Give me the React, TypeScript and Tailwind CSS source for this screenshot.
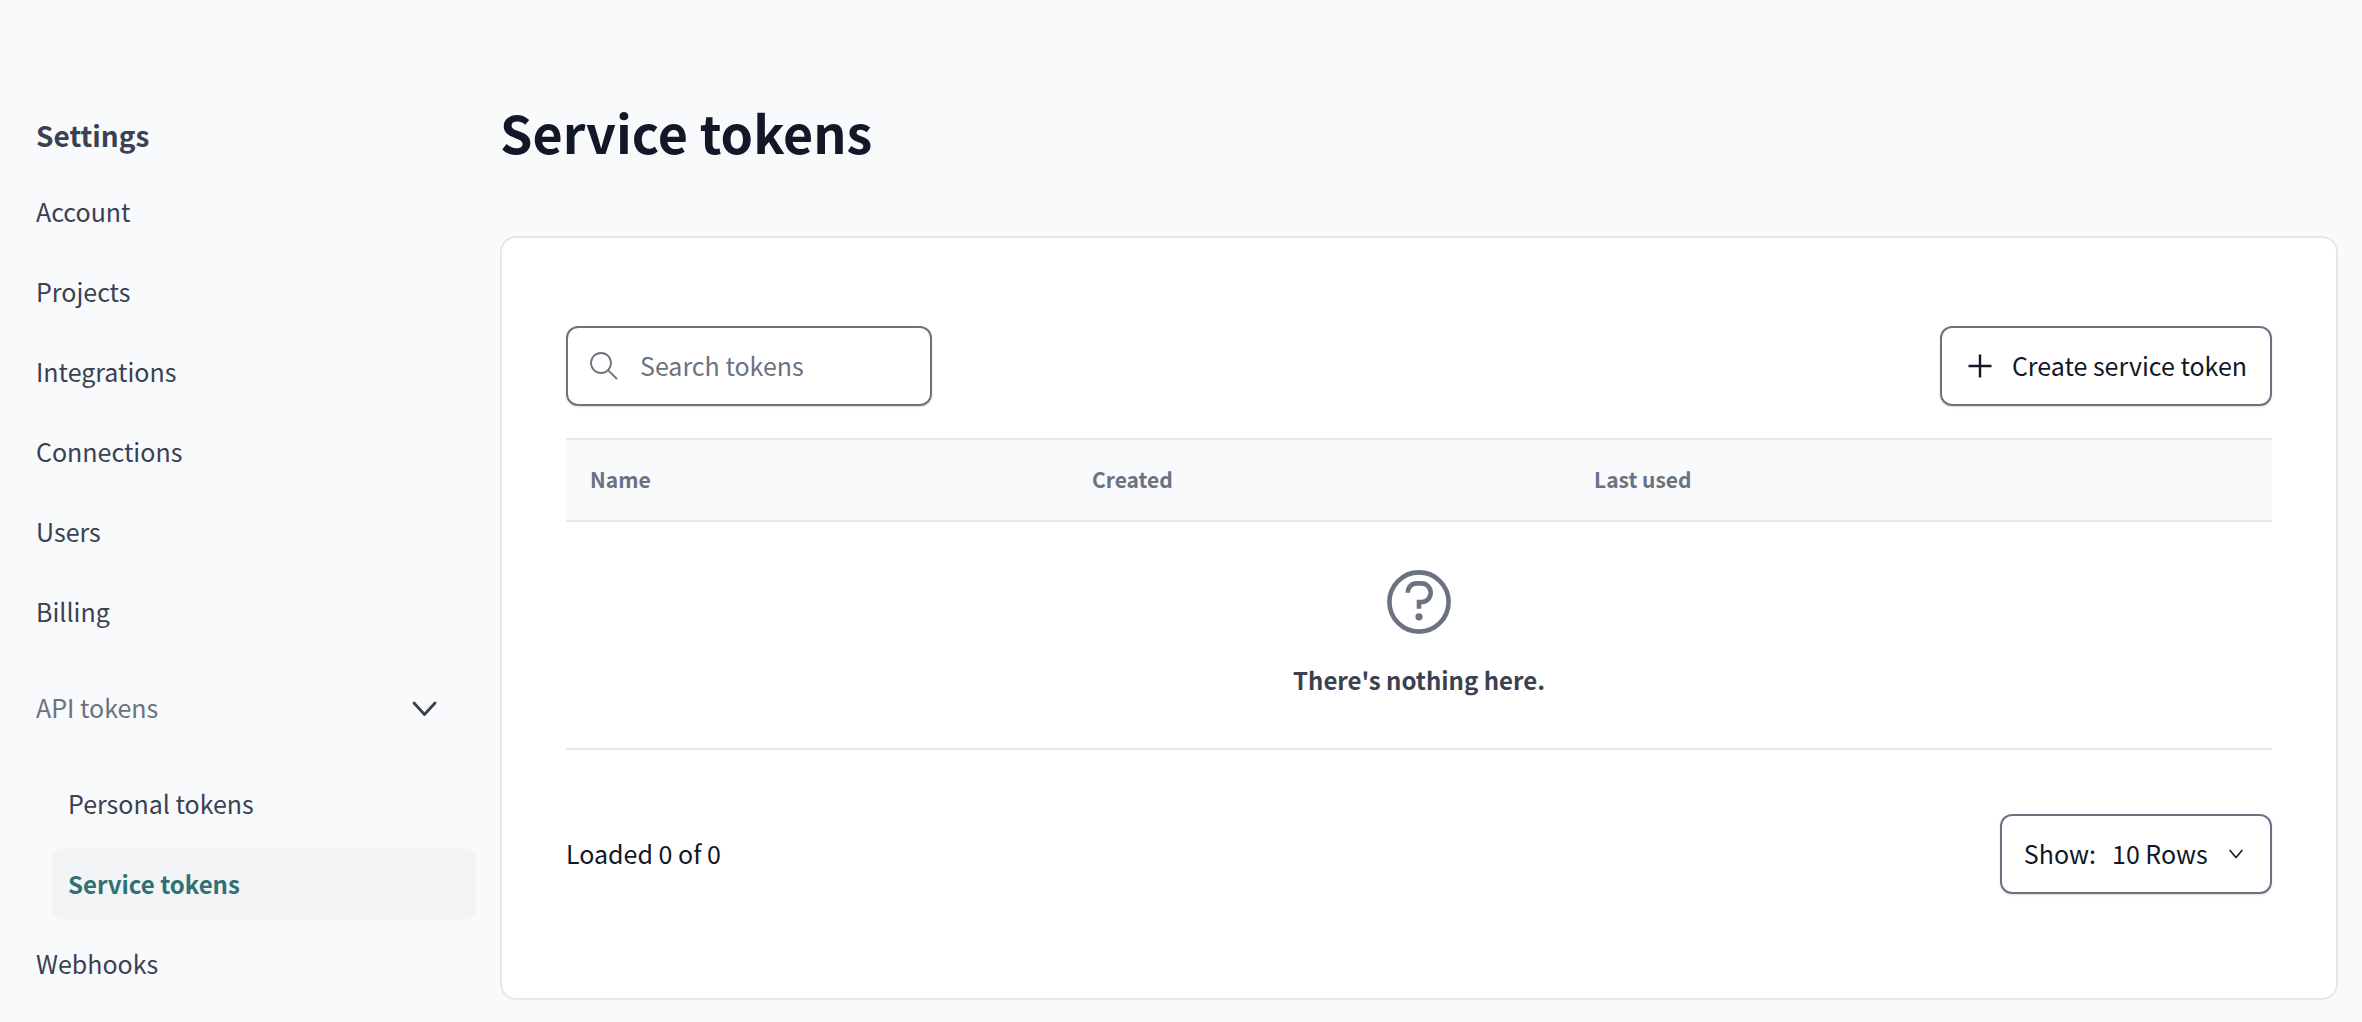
import { useState } from "react";

const topLinks = ["Account", "Projects", "Integrations", "Connections", "Users", "Billing"];
const tokenLinks = ["Personal tokens", "Service tokens"];
const columns = ["Name", "Created", "Last used"];

function NavLink({ label, active = false }: { label: string; active?: boolean }) {
  return (
    <a
      href="#"
      aria-current={active ? "page" : undefined}
      className={
        active
          ? "flex h-18 items-center rounded-xl bg-[#f3f4f6] px-4 text-[24px] font-bold text-[#2f7175]"
          : "flex h-18 items-center rounded-xl px-4 pb-0.5"
      }
    >
      {label}
    </a>
  );
}

function ChevronIcon() {
  return (
    <svg viewBox="0 0 32 32" className="size-8" fill="none" stroke="currentColor" strokeWidth="2.8" strokeLinecap="round" strokeLinejoin="round" aria-hidden="true">
      <path d="M6 12 16.500 23.500 27 12" />
    </svg>
  );
}

function SmallChevronIcon() {
  return (
    <svg viewBox="0 0 20 20" className="size-5" fill="none" stroke="currentColor" strokeWidth="1.6" strokeLinecap="round" strokeLinejoin="round" aria-hidden="true">
      <path d="M4 6.500 10 13.500l6-7" />
    </svg>
  );
}

function SearchIcon() {
  return (
    <svg viewBox="0 0 28 28" className="size-7 shrink-0" fill="none" stroke="currentColor" strokeWidth="1.8" strokeLinecap="round" aria-hidden="true">
      <circle cx="11" cy="11" r="10" />
      <path d="m18.300 18.300 8.200 8.200" />
    </svg>
  );
}

function PlusIcon() {
  return (
    <svg viewBox="0 0 24 24" className="size-6" fill="none" stroke="currentColor" strokeWidth="2.400" aria-hidden="true">
      <path d="M12 0.500v23M0.500 12h23" />
    </svg>
  );
}

function QuestionIcon() {
  return (
    <svg viewBox="0 0 64 64" className="size-16" fill="none" stroke="currentColor" strokeWidth="4.600" aria-hidden="true">
      <circle cx="32" cy="32" r="29.600" />
      <path d="M20.800 22.800C20.800 17 24.800 13.400 29.500 13.400h4.900c5.300 0 9.300 4.100 9.300 9.300S39.700 32 34.400 32H32v6.800" />
      <circle cx="32" cy="46.800" r="3.600" fill="currentColor" stroke="none" />
    </svg>
  );
}

export default function App() {
  const [open, setOpen] = useState(true);
  return (
    <div className="flex min-h-screen bg-[#f9fafc] pr-6 font-['Noto_Sans_CJK_SC','Noto_Sans',sans-serif] text-[25px] leading-9 text-[#111827]">
      <nav aria-label="Settings" className="flex w-[500px] shrink-0 flex-col gap-2 pt-28 pr-6 pl-5 text-[#3a4152]">
        <h2 className="mb-2 flex h-12 items-center px-4 pb-0.5 text-[28px] font-bold">Settings</h2>
        {topLinks.map((label) => (
          <NavLink key={label} label={label} />
        ))}
        <button
          type="button"
          aria-expanded={open}
          onClick={() => setOpen(!open)}
          className="my-4 flex h-18 items-center justify-between pr-9 pb-0.5 pl-4 text-left"
        >
          <span className="text-[#6b7280]">API tokens</span>
          <ChevronIcon />
        </button>
        {open && (
          <div className="flex flex-col gap-2 pl-8">
            {tokenLinks.map((label) => (
              <NavLink key={label} label={label} active={label === "Service tokens"} />
            ))}
          </div>
        )}
        <NavLink label="Webhooks" />
      </nav>

      <main className="min-w-0 flex-1 pt-24">
        <h1 className="flex h-18 items-center text-[52px] font-bold">Service tokens</h1>
        <section className="mt-17 mb-5 rounded-2xl border-2 border-[#e5e7eb] bg-white px-16 pt-22 pb-26">
          <div className="flex items-center justify-between">
            <label className="flex h-20 w-[366px] items-center gap-[22px] rounded-xl border-2 border-[#6b7280] px-[22px] text-[#6b7280] shadow-sm">
              <SearchIcon />
              <input
                type="search"
                aria-label="Search tokens"
                placeholder="Search tokens"
                className="min-w-0 flex-1 pb-0.5 text-[#111827] outline-none placeholder:text-[#6b7280]"
              />
            </label>
            <button type="button" className="flex h-20 items-center gap-5 rounded-xl border-2 border-[#6b7280] pr-[23px] pl-[26px] shadow-sm">
              <PlusIcon />
              <span className="pb-0.5">Create service token</span>
            </button>
          </div>

          <table className="mt-8 w-full table-fixed">
            <thead>
              <tr className="h-[82px] border-y-2 border-[#e5e7eb] bg-[#f9fafc] text-left text-[21px] text-[#6b7280]">
                {columns.map((name) => (
                  <th key={name} scope="col" className="px-6 pb-0.5 font-bold">
                    {name}
                  </th>
                ))}
                <td className="w-[200px]" />
              </tr>
            </thead>
            <tbody>
              <tr className="border-b-2 border-[#e5e7eb]">
                <td colSpan={4} className="h-[228px]">
                  <div className="flex flex-col items-center gap-7 pb-0.5 text-[#6b7280]">
                    <QuestionIcon />
                    <p className="text-[24px] font-bold text-[#3a4152]">There&#39;s nothing here.</p>
                  </div>
                </td>
              </tr>
            </tbody>
          </table>

          <div className="mt-16 flex items-center justify-between">
            <p className="pb-0.5">Loaded 0 of 0</p>
            <div className="relative flex h-20 items-center rounded-xl border-2 border-[#6b7280] pl-[22px] shadow-sm">
              <label htmlFor="rows" className="pb-0.5">Show:</label>
              <select id="rows" className="h-full w-[174px] appearance-none rounded-xl pb-0.5 pl-4 outline-none">
                <option>10 Rows</option>
                <option>25 Rows</option>
                <option>50 Rows</option>
              </select>
              <span className="pointer-events-none absolute right-6">
                <SmallChevronIcon />
              </span>
            </div>
          </div>
        </section>
      </main>
    </div>
  );
}
